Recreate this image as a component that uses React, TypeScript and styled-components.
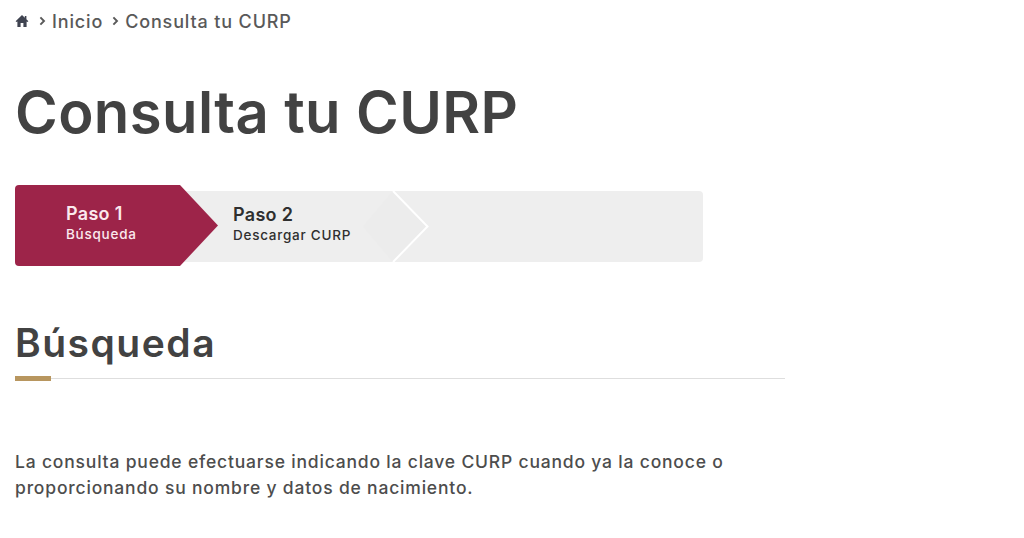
import styled, { createGlobalStyle } from 'styled-components';

const GlobalStyle = createGlobalStyle`
  html, body {
    margin: 0;
    padding: 0;
    background: #fff;
    overflow: hidden;
  }
  body {
    font-family: Inter, "Open Sans", "Liberation Sans", sans-serif;
    color: #454545;
  }
`;

const Page = styled.main`
  width: 1024px;
  height: 538px;
  box-sizing: border-box;
  padding: 11px 0 0 15px;
  display: flex;
  flex-direction: column;
`;

const Breadcrumb = styled.nav`
  display: flex;
  align-items: center;
  height: 20px;
  font-size: 18px;
  font-weight: 500;
  letter-spacing: 0.85px;
  color: #595959;
`;

const Crumb = styled.span`
  display: flex;
  align-items: center;
  margin-left: ${({ $gap }: { $gap: number }) => $gap}px;
  gap: 6px;
`;

const Title = styled.h1`
  margin: 49px 0 0;
  height: 65px;
  line-height: 65px;
  font-size: 58px;
  font-weight: 600;
  letter-spacing: 0.4px;
  color: #424242;
`;

const Stepper = styled.div`
  position: relative;
  margin-top: 46px;
  width: 688px;
  height: 71px;
  margin-bottom: 5px;
  display: flex;
  align-items: center;
  background: #eeeeee;
  border-radius: 4px;
`;

const ActiveStep = styled.div`
  width: 203px;
  height: 81px;
  margin-top: -2px;
  flex: none;
  box-sizing: border-box;
  padding: 0 0 4px 51px;
  display: flex;
  flex-direction: column;
  justify-content: center;
  background: #9d2449;
  border-radius: 4px;
  color: #fbe9ee;
  clip-path: polygon(0 0, 165px 0, 100% 50%, 165px 100%, 0 100%);
`;

const NextStep = styled.div`
  margin: 0 0 5px 15px;
  display: flex;
  flex-direction: column;
  color: #2f2f2f;
`;

const StepName = styled.span`
  font-size: 18px;
  font-weight: 600;
  letter-spacing: 0.3px;
  line-height: 20px;
`;

const StepDetail = styled.span`
  font-size: 13.5px;
  font-weight: 500;
  letter-spacing: 0.75px;
  line-height: 17px;
  margin-top: 2px;
`;

const Chevron = styled.svg`
  position: absolute;
  left: 376px;
  top: 0;
  overflow: visible;
`;

const SectionTitle = styled.h2`
  margin: 53px 0 0;
  height: 46px;
  line-height: 46px;
  font-size: 39px;
  font-weight: 600;
  letter-spacing: 1.5px;
  color: #424242;
`;

const Rule = styled.div`
  position: relative;
  margin-top: 12px;
  width: 770px;
  height: 1px;
  background: #dedede;
`;

const RuleAccent = styled.span`
  position: absolute;
  left: 0;
  top: -2px;
  width: 36px;
  height: 5px;
  background: #b8965f;
`;

const Paragraph = styled.p`
  margin: 70px 0 0;
  width: 760px;
  font-size: 17.5px;
  font-weight: 500;
  letter-spacing: 0.81px;
  line-height: 26px;
  color: #4d4d4d;
`;

function HomeIcon() {
  return (
    <svg width="14" height="14" viewBox="0 0 14 14" aria-hidden="true">
      <path
        d="M7 1 L0.6 7.2 L1.6 8 L2.4 7.4 V13 H5.6 V9 H8.4 V13 H11.6 V7.4 L12.4 8 L13.4 7.2 L11.4 5.2 V2 H9.8 V3.7 Z"
        fill="#3f4350"
      />
    </svg>
  );
}

function Caret() {
  return (
    <svg width="7" height="10" viewBox="0 0 7 10" aria-hidden="true">
      <path d="M1.4 1.4 L5 5 L1.4 8.6" fill="none" stroke="#595959" strokeWidth="1.9" />
    </svg>
  );
}

export default function App() {
  return (
    <>
      <GlobalStyle />
      <Page>
        <Breadcrumb>
          <HomeIcon />
          <Crumb $gap={10}>
            <Caret />
            Inicio
          </Crumb>
          <Crumb $gap={9}>
            <Caret />
            Consulta tu CURP
          </Crumb>
        </Breadcrumb>
        <Title>Consulta tu CURP</Title>
        <Stepper>
          <ActiveStep>
            <StepName>Paso 1</StepName>
            <StepDetail>Búsqueda</StepDetail>
          </ActiveStep>
          <NextStep>
            <StepName>Paso 2</StepName>
            <StepDetail>Descargar CURP</StepDetail>
          </NextStep>
          <Chevron width="40" height="71" viewBox="0 0 40 71" aria-hidden="true">
            <path d="M2 0 L-28 35.5 L2 71 L36.5 35.5 Z" fill="#ececec" />
            <path d="M2 0 L36.5 35.5 L2 71" fill="none" stroke="#ffffff" strokeWidth="2" />
          </Chevron>
        </Stepper>
        <SectionTitle>Búsqueda</SectionTitle>
        <Rule>
          <RuleAccent />
        </Rule>
        <Paragraph>
          La consulta puede efectuarse indicando la clave CURP cuando ya la conoce o
          <br />
          proporcionando su nombre y datos de nacimiento.
        </Paragraph>
      </Page>
    </>
  );
}
